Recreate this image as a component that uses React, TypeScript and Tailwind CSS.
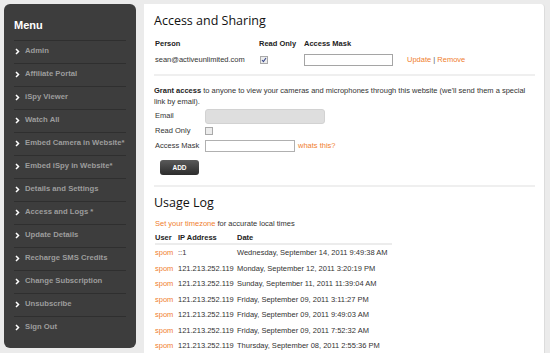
const menuItems = [
  "Admin",
  "Affiliate Portal",
  "iSpy Viewer",
  "Watch All",
  "Embed Camera in Website*",
  "Embed iSpy in Website*",
  "Details and Settings",
  "Access and Logs *",
  "Update Details",
  "Recharge SMS Credits",
  "Change Subscription",
  "Unsubscribe",
  "Sign Out",
];

const logRows = [
  ["::1", "Wednesday, September 14, 2011 9:49:38 AM"],
  ["121.213.252.119", "Monday, September 12, 2011 3:20:19 PM"],
  ["121.213.252.119", "Sunday, September 11, 2011 11:39:04 AM"],
  ["121.213.252.119", "Friday, September 09, 2011 3:11:27 PM"],
  ["121.213.252.119", "Friday, September 09, 2011 9:49:03 AM"],
  ["121.213.252.119", "Friday, September 09, 2011 7:52:32 AM"],
  ["121.213.252.119", "Thursday, September 08, 2011 2:55:36 PM"],
];

const Chevron = () => (
  <svg width="5" height="7" viewBox="0 0 5 7" className="shrink-0">
    <polyline points="1,1 3.5,3.5 1,6" fill="none" stroke="#ffffff" strokeWidth="1.5" />
  </svg>
);

const Sidebar = () => (
  <aside className="w-[132px] h-[344px] shrink-0 rounded-[6px] bg-[#3d3d3d] px-[10px]">
    <h2 className="pt-[14px] pb-[8px] h-[36px] text-[11px] leading-[14px] font-bold text-white">Menu</h2>
    <ul>
      {menuItems.map((item) => (
        <li key={item} className="h-[23px] border-t border-[#2f2f2f] flex items-center gap-x-[5px] pl-[1px] pb-[2px]">
          <Chevron />
          <span className="text-[7.7px] font-bold text-[#9c9c9c] whitespace-nowrap">{item}</span>
        </li>
      ))}
    </ul>
  </aside>
);

const Checkbox = ({ checked }: { checked?: boolean }) => (
  <span className="w-[8px] h-[8px] border border-[#a9a9a9] bg-[#ececec] flex items-center justify-center">
    {checked && (
      <svg width="6" height="6" viewBox="0 0 6 6">
        <polyline points="1,3 2.4,4.6 5,1" fill="none" stroke="#3b4a8c" strokeWidth="1.1" />
      </svg>
    )}
  </span>
);

export default function App() {
  return (
    <div className="w-[550px] h-[353px] overflow-hidden bg-[#ebebeb] flex gap-x-[8px] pt-[4px] pl-[4px] text-[#333] text-[7.5px] font-['Liberation_Sans',Arial,sans-serif]">
      <Sidebar />

      <main className="w-[401px] h-[400px] shrink-0 bg-white rounded-tr-[4px] border-r border-[#dcdcdc] pl-[10px] pr-[9px]">
        <h1 className="mt-[9px] h-[16px] text-[12.5px] leading-[16px] text-[#111] font-['Open_Sans',sans-serif]">Access and Sharing</h1>

        <div className="mt-[10px] px-[1px]">
          <div className="grid grid-cols-[104px_45px_103px_1fr] h-[10px] leading-[10px] font-bold text-[#222]">
            <span>Person</span>
            <span>Read Only</span>
            <span>Access Mask</span>
            <span></span>
          </div>
          <div className="grid grid-cols-[104px_45px_103px_1fr] h-[14px] mt-[4px] items-center">
            <span>sean@activeunlimited.com</span>
            <span className="pl-[1px]"><Checkbox checked /></span>
            <span className="w-[89px] h-[12px] border border-[#a5a5a5] bg-white"></span>
            <span className="text-[#f0802f]">Update <span className="text-[#555]">|</span> Remove</span>
          </div>
        </div>

        <div className="mt-[7px] h-[2px] bg-[#efefef]"></div>

        <p className="mt-[9px] leading-[11px] pr-[8px]">
          <span className="font-bold text-[#222]">Grant access</span>{" "}to anyone to view your cameras and microphones through this website (we'll send them a special link by email).
        </p>

        <div className="mt-[1px] px-[1px]">
          <div className="flex items-center h-[16px]">
            <span className="w-[50px]">Email</span>
            <span className="w-[120px] h-[15px] rounded-[3px] bg-[#dedede] border border-[#d2d2d2]"></span>
          </div>
          <div className="flex items-center h-[14px]">
            <span className="w-[50px]">Read Only</span>
            <Checkbox />
          </div>
          <div className="flex items-center h-[14px] mt-[1px]">
            <span className="w-[50px]">Access Mask</span>
            <span className="w-[90px] h-[12px] border border-[#b0b0b0] bg-white"></span>
            <span className="ml-[3px] text-[#f0802f]">whats this?</span>
          </div>
        </div>

        <button className="mt-[7px] ml-[6px] w-[39px] h-[15px] rounded-[3px] bg-gradient-to-b from-[#5a5a5a] to-[#2c2c2c] text-white font-bold text-[6.5px] flex items-center justify-center">
          ADD
        </button>

        <div className="mt-[10px] h-[2px] bg-[#efefef]"></div>

        <h1 className="mt-[8px] h-[16px] text-[12.5px] leading-[16px] text-[#111] font-['Open_Sans',sans-serif]">Usage Log</h1>

        <p className="mt-[8px] h-[10px] leading-[10px] pl-[1px]">
          <span className="text-[#f0802f]">Set your timezone</span> for accurate local times
        </p>

        <div className="mt-[4px] pl-[1px] w-[238px]">
          <div className="grid grid-cols-[23px_59px_1fr] h-[10px] leading-[10px] font-bold text-[#222]">
            <span>User</span>
            <span>IP Address</span>
            <span>Date</span>
          </div>
          <div className="h-[2px] bg-[#ececec]"></div>
          {logRows.map(([ip, date], i) => (
            <div key={i} className="grid grid-cols-[23px_59px_1fr] h-[15.5px] items-center whitespace-nowrap">
              <span className="text-[#f0802f]">spom</span>
              <span>{ip}</span>
              <span>{date}</span>
            </div>
          ))}
        </div>
      </main>
    </div>
  );
}
